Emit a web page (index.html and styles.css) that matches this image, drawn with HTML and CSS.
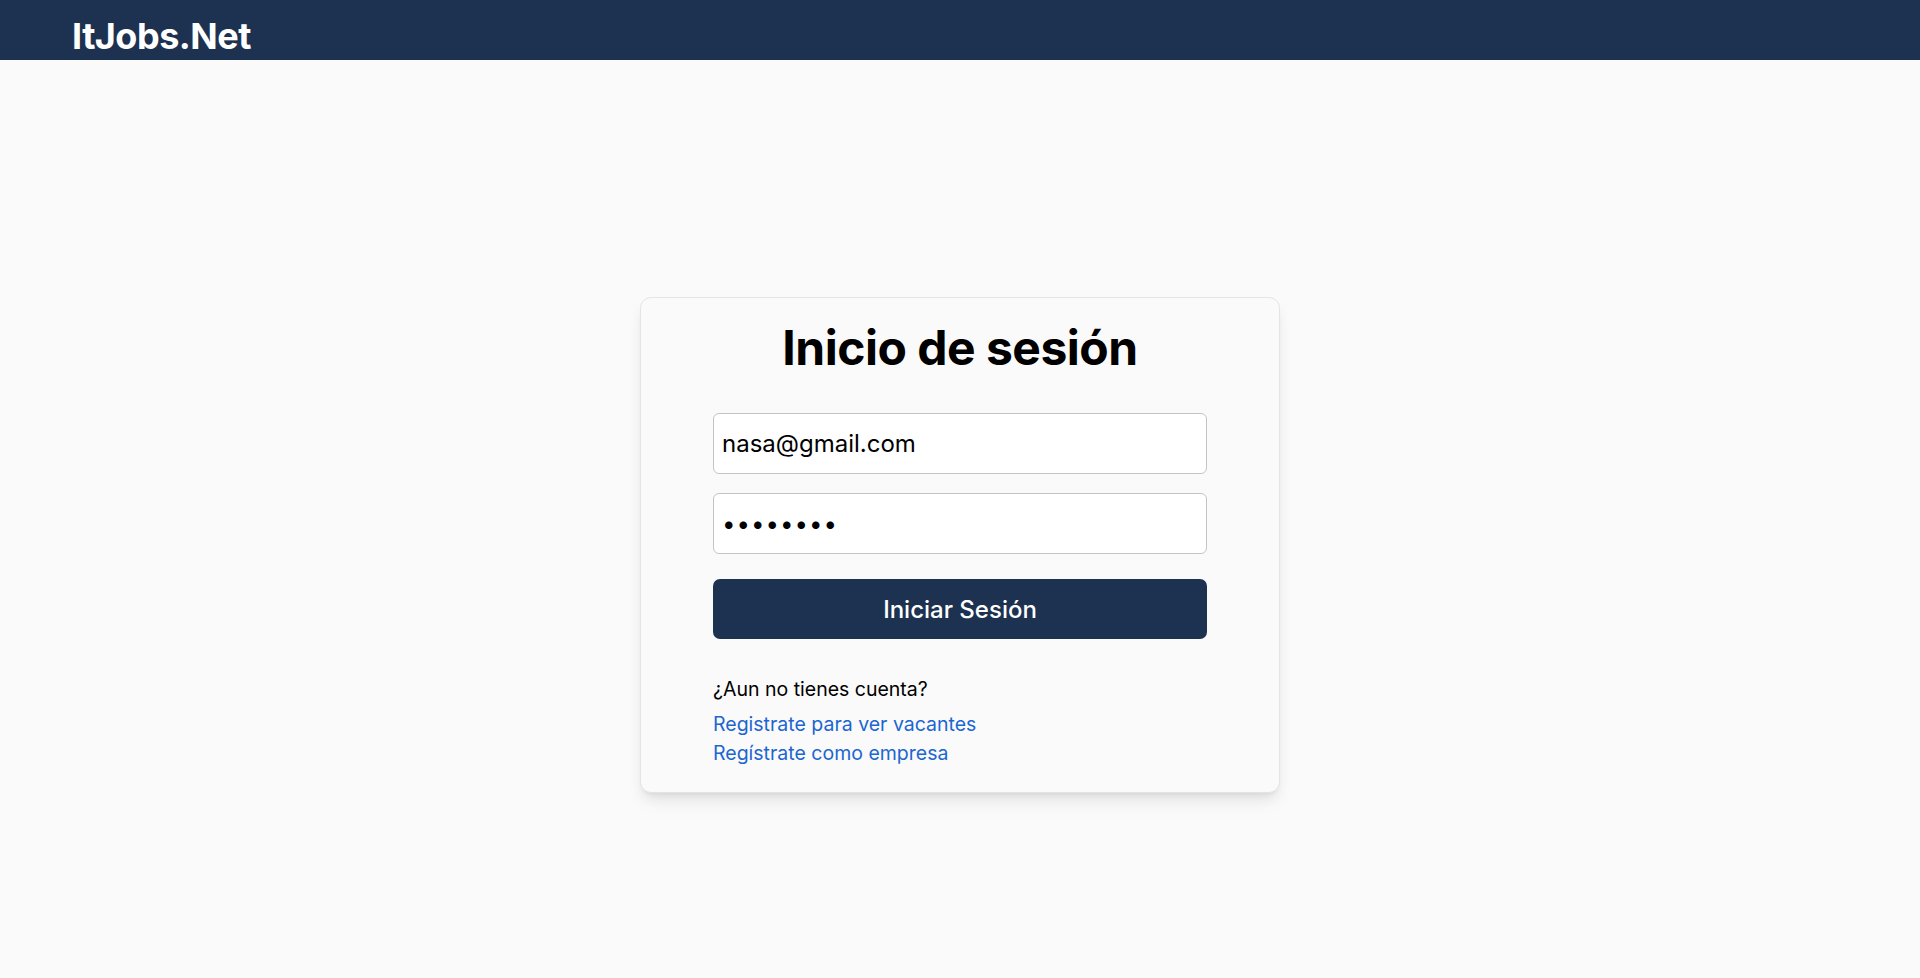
FILE: index.html
```html
<!DOCTYPE html>
<html lang="es">
<head>
<meta charset="utf-8">
<title>ItJobs.Net - Inicio de sesión</title>
<link rel="stylesheet" href="styles.css">
</head>
<body>
<header class="topbar">
  <h1 class="logo">ItJobs.Net</h1>
</header>
<main class="main">
  <section class="card">
    <h2 class="title">Inicio de sesión</h2>
    <form class="form">
      <input class="field" type="email" value="nasa@gmail.com">
      <input class="field field-pass" type="password" value="12345678">
      <button class="btn" type="button">Iniciar Sesión</button>
    </form>
    <div class="extra">
      <p class="question">¿Aun no tienes cuenta?</p>
      <a class="link" href="#">Registrate para ver vacantes</a>
      <a class="link" href="#">Regístrate como empresa</a>
    </div>
  </section>
</main>
</body>
</html>
```

FILE: styles.css
```css
* { box-sizing: border-box; }
html, body { margin: 0; padding: 0; }
body {
  background: #fafafa;
  font-family: Inter, "Noto Sans", sans-serif;
  color: #000;
  min-height: 978px;
}
.topbar {
  height: 60px;
  background: #1d3250;
  padding: 14px 0 0 72px;
  overflow: hidden;
}
.logo {
  margin: 0;
  color: #fff;
  font-size: 36px;
  line-height: 44px;
  font-weight: 700;
  letter-spacing: -0.5px;
}
.main {
  display: flex;
  justify-content: center;
  padding-top: 237px;
}
.card {
  width: 640px;
  background: #fafafa;
  border: 1px solid #e4e4e4;
  border-radius: 11px;
  box-shadow: 0 10px 15px -3px rgba(0,0,0,0.1), 0 4px 6px -4px rgba(0,0,0,0.1);
  padding: 20px 0 24px;
  display: flex;
  flex-direction: column;
  align-items: center;
}
.title {
  margin: 0;
  font-size: 48px;
  line-height: 59px;
  font-weight: 700;
  letter-spacing: -0.5px;
}
.form {
  width: 494px;
  margin-top: 36px;
  display: flex;
  flex-direction: column;
}
.field {
  height: 61px;
  border: 1px solid #c4c4c4;
  border-radius: 6px;
  background: #fff;
  padding: 0 8px;
  font-family: Inter, "Noto Sans", sans-serif;
  font-size: 24px;
  color: #000;
  outline: none;
}
.field + .field { margin-top: 19px; }
.field-pass { letter-spacing: 1px; }
.btn {
  margin-top: 25px;
  height: 60px;
  border: none;
  border-radius: 7px;
  background: #1d3250;
  color: #fff;
  font-family: Inter, "Noto Sans", sans-serif;
  font-size: 24px;
  font-weight: 500;
}
.extra {
  width: 494px;
  margin-top: 36px;
  display: flex;
  flex-direction: column;
  font-size: 19.5px;
  line-height: 29px;
}
.question { margin: 0 0 6px; }
.link {
  color: #1b66d1;
  text-decoration: none;
}
```
